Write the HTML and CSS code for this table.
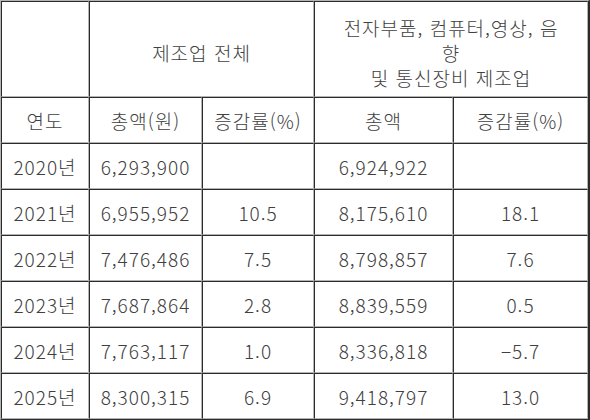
FILE: index.html
```html
<!DOCTYPE html>
<html lang="ko">
<head>
    <meta charset="UTF-8">
    <title>제조업 매출 추이</title>
    <link rel="stylesheet" href="styles.css">
</head>
<body>
    <table class="sales">
        <colgroup>
            <col class="col-year">
            <col class="col-total">
            <col class="col-rate">
            <col class="col-total2">
            <col class="col-rate2">
        </colgroup>
        <thead>
            <tr class="group-row">
                <td></td>
                <td colspan="2">제조업 전체</td>
                <td colspan="2">전자부품, 컴퓨터,영상, 음<br>향<br>및 통신장비 제조업</td>
            </tr>
            <tr>
                <td>연도</td>
                <td>총액(원)</td>
                <td>증감률(%)</td>
                <td>총액</td>
                <td>증감률(%)</td>
            </tr>
        </thead>
        <tbody>
            <tr><td>2020년</td><td>6,293,900</td><td></td><td>6,924,922</td><td></td></tr>
            <tr><td>2021년</td><td>6,955,952</td><td>10.5</td><td>8,175,610</td><td>18.1</td></tr>
            <tr><td>2022년</td><td>7,476,486</td><td>7.5</td><td>8,798,857</td><td>7.6</td></tr>
            <tr><td>2023년</td><td>7,687,864</td><td>2.8</td><td>8,839,559</td><td>0.5</td></tr>
            <tr><td>2024년</td><td>7,763,117</td><td>1.0</td><td>8,336,818</td><td>&minus;5.7</td></tr>
            <tr><td>2025년</td><td>8,300,315</td><td>6.9</td><td>9,418,797</td><td>13.0</td></tr>
        </tbody>
    </table>
</body>
</html>
```
FILE: styles.css
```css
body {
    margin: 0;
    background: #fff;
    font-family: "Noto Sans CJK KR", "Noto Sans", sans-serif;
    font-size: 19px;
    font-weight: 300;
    color: #404040;
}

.sales {
    width: 590px;
    table-layout: fixed;
    border-spacing: 0;
    border-style: solid;
    border-width: 1px 2px 2px 1px;
    border-color: #b4b4b4 #2b2b2b #2b2b2b #b4b4b4;
}

.col-year { width: 88px; }
.col-total { width: 113px; }
.col-rate { width: 112px; }
.col-total2 { width: 139px; }
.col-rate2 { width: 135px; }

.sales td {
    box-sizing: border-box;
    height: 46px;
    padding: 0;
    text-align: center;
    vertical-align: middle;
    letter-spacing: 1px;
    line-height: 25px;
    border-style: solid;
    border-width: 1px;
    border-color: #2b2b2b #b4b4b4 #b4b4b4 #2b2b2b;
}

.group-row td {
    height: 96px;
    padding-top: 6px;
}
```
